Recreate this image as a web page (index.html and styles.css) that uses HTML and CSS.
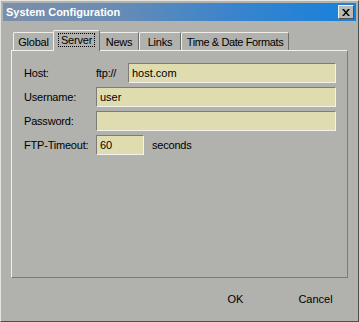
FILE: index.html
```html
<!DOCTYPE html>
<html lang="en">
<head>
    <meta charset="UTF-8">
    <title>System Configuration</title>
    <link rel="stylesheet" href="styles.css">
</head>
<body>
    <div class="window">
        <div class="titlebar">
            <span class="title">System Configuration</span>
            <button class="close-btn" aria-label="Close">
                <svg width="8" height="7" viewBox="0 0 8 7">
                    <path d="M0 0h2l2 2.5L6 0h2L5 3.5 8 7H6L4 4.5 2 7H0l3-3.5z" fill="#000"/>
                </svg>
            </button>
        </div>

        <!-- Tab strip -->
        <div class="tabs">
            <div class="tab tab-global">Global</div>
            <div class="tab tab-server active"><span class="focus">Server</span></div>
            <div class="tab tab-news">News</div>
            <div class="tab tab-links">Links</div>
            <div class="tab tab-time">Time &amp; Date Formats</div>
        </div>

        <div class="panel">
            <div class="form-row">
                <label class="label">Host:</label>
                <span class="prefix">ftp://</span>
                <input class="field" type="text" value="host.com">
            </div>
            <div class="form-row">
                <label class="label">Username:</label>
                <input class="field" type="text" value="user">
            </div>
            <div class="form-row">
                <label class="label">Password:</label>
                <input class="field" type="password" value="">
            </div>
            <div class="form-row">
                <label class="label">FTP-Timeout:</label>
                <input class="field short" type="text" value="60">
                <span class="unit">seconds</span>
            </div>
        </div>

        <div class="buttons">
            <button class="btn">OK</button>
            <button class="btn">Cancel</button>
        </div>
    </div>
</body>
</html>
```

FILE: styles.css
```css
/* General Styles */
body {
    margin: 0;
    padding: 0;
    font-family: 'Liberation Sans', Arial, sans-serif;
    font-size: 11px;
    color: #000;
    background-color: #b1b1ad;
}

.window {
    width: 359px;
    height: 322px;
    box-sizing: border-box;
    padding: 2px;
    border: 1px solid;
    border-color: #e4e4e0 #4e4e4c #4e4e4c #e4e4e0;
    background-color: #b1b1ad;
    display: flex;
    flex-direction: column;
}

/* Title bar */
.titlebar {
    height: 18px;
    display: flex;
    align-items: center;
    justify-content: space-between;
    padding: 0 2px 0 3px;
    background: linear-gradient(to right, #7b8fab, #6a8cb4 30%, #3a84cc 65%, #1681dc);
}

.title {
    color: #fff;
    font-weight: bold;
    font-size: 11px;
}

.close-btn {
    width: 16px;
    height: 14px;
    padding: 0;
    display: flex;
    align-items: center;
    justify-content: center;
    background-color: #b9b9b5;
    border: 1px solid;
    border-color: #f2f2ee #505050 #505050 #f2f2ee;
}

/* Tabs */
.tabs {
    display: flex;
    align-items: flex-end;
    height: 21px;
    margin-top: 8px;
    padding-left: 10px;
    letter-spacing: -0.2px;
}

.tab {
    height: 18px;
    line-height: 18px;
    text-align: center;
    border: 1px solid;
    border-bottom: none;
    border-color: #eeeeea #6e6e6c #6e6e6c #eeeeea;
    border-radius: 2px 2px 0 0;
    box-sizing: border-box;
}

.tab-global { width: 41px; }
.tab-server { width: 47px; }
.tab-news { width: 40px; }
.tab-links { width: 42px; }
.tab-time { width: 108px; letter-spacing: -0.4px; }

.tab.active {
    height: 21px;
    line-height: 19px;
    margin: 0 -1px -1px;
    position: relative;
    z-index: 1;
    background-color: #b1b1ad;
}

.tab.active .focus {
    outline: 1px dotted #000;
    padding: 0 2px;
}

/* Panel */
.panel {
    height: 228px;
    box-sizing: border-box;
    margin: 0 8px;
    padding: 12px 11px 0 12px;
    border: 1px solid;
    border-color: #f0f0ec #7a7a78 #7a7a78 #f0f0ec;
    display: flex;
    flex-direction: column;
    gap: 4px;
}

.form-row {
    display: flex;
    align-items: center;
    height: 20px;
    letter-spacing: -0.2px;
}

.label {
    width: 72px;
    flex-shrink: 0;
}

.prefix {
    width: 32px;
    flex-shrink: 0;
}

.field {
    flex: 1;
    min-width: 0;
    height: 20px;
    box-sizing: border-box;
    margin: 0;
    padding: 0 3px;
    font-family: 'Liberation Sans', Arial, sans-serif;
    font-size: 11px;
    color: #000;
    background-color: #dfddb0;
    border: 1px solid;
    border-color: #7c7c78 #f2f2ec #f2f2ec #7c7c78;
    outline: none;
}

.field.short {
    flex: none;
    width: 48px;
}

.unit {
    margin-left: 8px;
}

/* Dialog buttons */
.buttons {
    display: flex;
    justify-content: flex-end;
    gap: 5px;
    margin-top: 9px;
    padding-right: 3px;
}

.btn {
    width: 75px;
    height: 23px;
    padding: 0;
    font-family: 'Liberation Sans', Arial, sans-serif;
    font-size: 11px;
    color: #000;
    background: transparent;
    border: none;
}
```
